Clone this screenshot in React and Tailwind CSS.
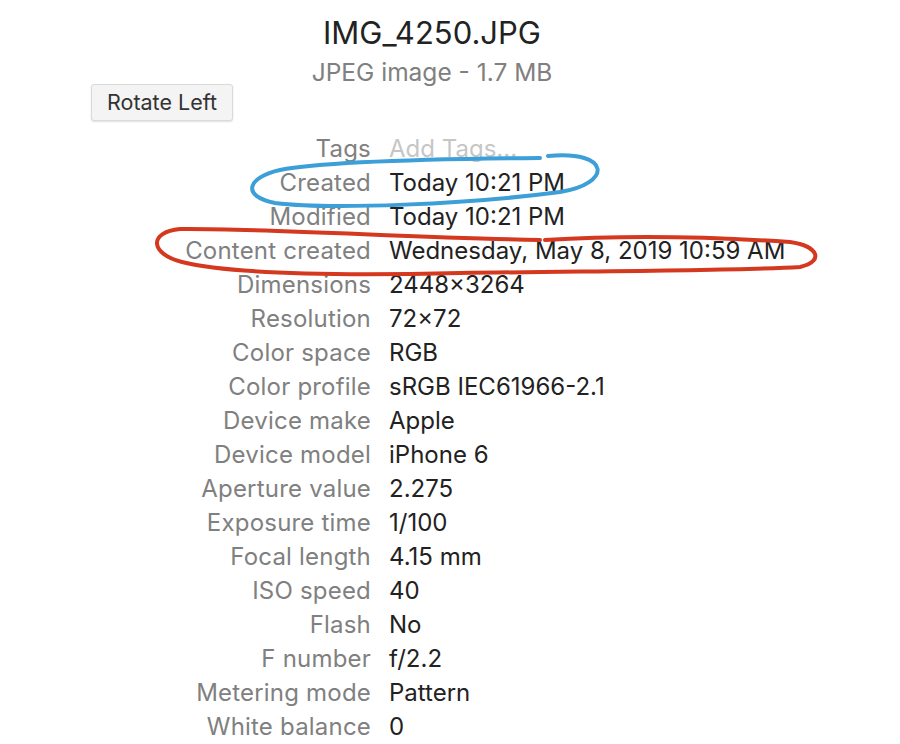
const rows = [
  ['Tags', 'Add Tags...', true],
  ['Created', 'Today 10:21 PM'],
  ['Modified', 'Today 10:21 PM'],
  ['Content created', 'Wednesday, May 8, 2019 10:59 AM'],
  ['Dimensions', '2448×3264'],
  ['Resolution', '72×72'],
  ['Color space', 'RGB'],
  ['Color profile', 'sRGB IEC61966-2.1'],
  ['Device make', 'Apple'],
  ['Device model', 'iPhone 6'],
  ['Aperture value', '2.275'],
  ['Exposure time', '1/100'],
  ['Focal length', '4.15 mm'],
  ['ISO speed', '40'],
  ['Flash', 'No'],
  ['F number', 'f/2.2'],
  ['Metering mode', 'Pattern'],
  ['White balance', '0'],
]

export default function App() {
  return (
    <div className="relative w-[900px] h-[744px] overflow-hidden bg-white font-['Inter',sans-serif]">
      <div className="w-[864px] text-center pt-[14px]">
        <div className="text-[31px] leading-[38px] text-[#222]">IMG_4250.JPG</div>
        <div className="mt-[7px] text-[24.5px] leading-[26px] text-[#808080]">JPEG image - 1.7 MB</div>
      </div>

      <div className="pl-[91px] -mt-[1px]">
        <button className="h-[37px] w-[142px] rounded-[3px] border border-[#dadada] bg-[#f4f4f4] text-[21.5px] text-[#333] shadow-[0_1px_2px_rgba(0,0,0,0.12)]">
          Rotate Left
        </button>
      </div>

      <div className="mt-[11px] flex flex-col">
        {rows.map(([label, value, placeholder]) => (
          <div key={label} className="flex h-[34px] items-center text-[24px] leading-[34px]">
            <div className="w-[371px] text-right text-[#808080] tracking-[0.2px]">{label}</div>
            <div className={`ml-[18px] ${placeholder ? 'text-[#c6c6c6]' : 'text-[#222]'}`}>{value}</div>
          </div>
        ))}
      </div>

      {/* hand-drawn annotations */}
      <svg className="absolute left-0 top-0 pointer-events-none" width="900" height="744" fill="none" strokeLinecap="round">
        <path
          d="M540 158 C430 159 320 162 280 170 C248 177 240 196 275 203 C330 210 470 204 560 192 C612 184 612 150 548 156"
          stroke="#3c9fd7"
          strokeWidth="4"
        />
        <path
          d="M540 240 C420 238 260 228 180 229 C148 232 150 254 182 262 C230 274 330 276 460 273 C600 271 740 271 800 267 C825 261 818 246 790 242 C700 236 610 236 545 240"
          stroke="#d4381f"
          strokeWidth="4"
        />
      </svg>
    </div>
  )
}
